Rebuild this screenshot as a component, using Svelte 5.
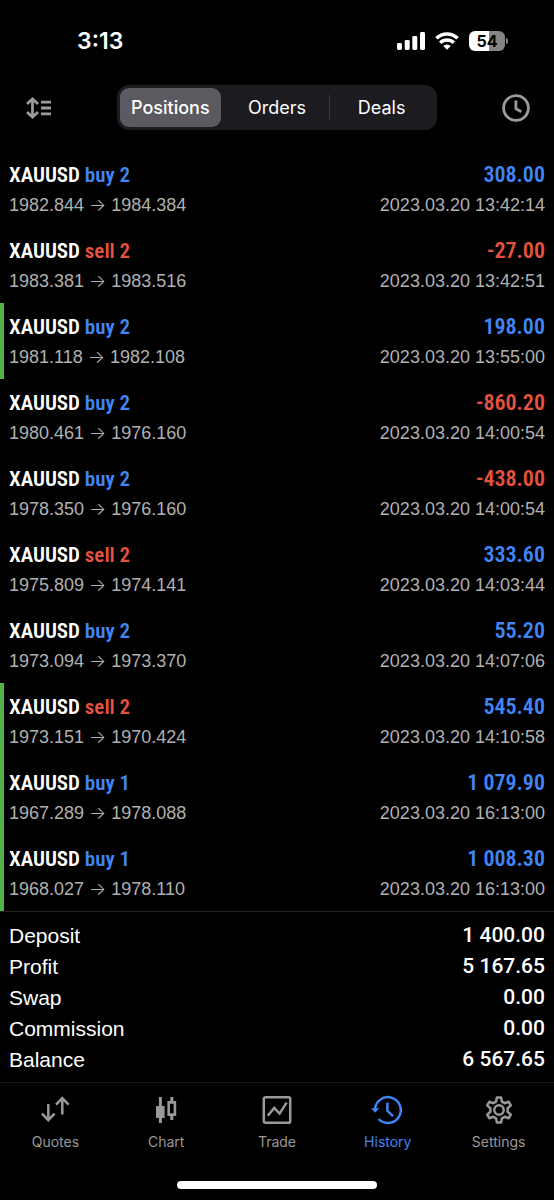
<script lang="ts">
type Position = {
  side: 'buy' | 'sell';
  volume: number;
  open: string;
  close: string;
  profit: string;
  time: string;
  marked?: boolean;
};

const views = ['Positions', 'Orders', 'Deals'];
const tabs = ['Quotes', 'Chart', 'Trade', 'History', 'Settings'];

const positions: Position[] = [
  { side: 'buy', volume: 2, open: '1982.844', close: '1984.384', profit: '308.00', time: '2023.03.20 13:42:14' },
  { side: 'sell', volume: 2, open: '1983.381', close: '1983.516', profit: '-27.00', time: '2023.03.20 13:42:51' },
  { side: 'buy', volume: 2, open: '1981.118', close: '1982.108', profit: '198.00', time: '2023.03.20 13:55:00', marked: true },
  { side: 'buy', volume: 2, open: '1980.461', close: '1976.160', profit: '-860.20', time: '2023.03.20 14:00:54' },
  { side: 'buy', volume: 2, open: '1978.350', close: '1976.160', profit: '-438.00', time: '2023.03.20 14:00:54' },
  { side: 'sell', volume: 2, open: '1975.809', close: '1974.141', profit: '333.60', time: '2023.03.20 14:03:44' },
  { side: 'buy', volume: 2, open: '1973.094', close: '1973.370', profit: '55.20', time: '2023.03.20 14:07:06' },
  { side: 'sell', volume: 2, open: '1973.151', close: '1970.424', profit: '545.40', time: '2023.03.20 14:10:58', marked: true },
  { side: 'buy', volume: 1, open: '1967.289', close: '1978.088', profit: '1 079.90', time: '2023.03.20 16:13:00', marked: true },
  { side: 'buy', volume: 1, open: '1968.027', close: '1978.110', profit: '1 008.30', time: '2023.03.20 16:13:00', marked: true },
];

const summary = [
  ['Deposit', '1 400.00'],
  ['Profit', '5 167.65'],
  ['Swap', '0.00'],
  ['Commission', '0.00'],
  ['Balance', '6 567.65'],
];

let view = $state('Positions');
let tab = $state('History');
</script>

<div class="app">
  <div class="status">
    <span class="time">3:13</span>
    <div class="indicators">
      <svg width="28" height="18" viewBox="0 0 28 18" fill="#fff" aria-hidden="true">
        <rect x="0" y="11" width="5" height="7" rx="1.4" />
        <rect x="7.7" y="8" width="5" height="10" rx="1.4" />
        <rect x="15.3" y="4" width="5" height="14" rx="1.4" />
        <rect x="23" y="0" width="5" height="18" rx="1.4" />
      </svg>
      <svg width="24" height="18" viewBox="0 0 24 18" fill="none" stroke="#fff" stroke-width="3.4" aria-hidden="true">
        <path d="M1.4 6.3a15.2 15.2 0 0 1 21.2 0" />
        <path d="M5.2 10.8a9.7 9.7 0 0 1 13.6 0" />
        <path d="M12 17.8l-3.7-3.7a5.2 5.2 0 0 1 7.4 0z" fill="#fff" stroke="none" />
      </svg>
      <span class="battery"><span>54</span></span>
    </div>
  </div>

  <header>
    <button class="icon" aria-label="Sort">
      <svg width="26" height="22" viewBox="0 0 26 22" fill="none" stroke="#9b9b9b" stroke-width="2.8" aria-hidden="true">
        <path d="M6.5 2v18M1 7 6.5 1.9 12 7M1 15l5.5 5.1L12 15" />
        <path d="M15 5.2h10M15 11h10M15 16.8h10" />
      </svg>
    </button>
    <div class="segments">
      {#each views as name}
        <button class:selected={view === name} onclick={() => (view = name)}>{name}</button>
      {/each}
    </div>
    <button class="icon" aria-label="Period">
      <svg width="28" height="28" viewBox="0 0 28 28" fill="none" stroke="#9b9b9b" stroke-width="2.8" aria-hidden="true">
        <circle cx="14" cy="14" r="12.4" />
        <path d="M13.9 6.5v8.2l5.4 3.1" />
      </svg>
    </button>
  </header>

  <ul class="positions">
    {#each positions as p}
      <li class:marked={p.marked}>
        <div class="line deal">
          <span class="symbol">XAUUSD <span class={p.side}>{p.side} {p.volume}</span></span>
          <span class={p.profit.startsWith('-') ? 'sell' : 'buy'}>{p.profit}</span>
        </div>
        <div class="line detail">
          <span>{p.open} <span class="arrow">→</span> {p.close}</span>
          <span>{p.time}</span>
        </div>
      </li>
    {/each}
  </ul>

  <dl class="summary">
    {#each summary as [label, value]}
      <div class="line">
        <dt>{label}</dt>
        <dd>{value}</dd>
      </div>
    {/each}
  </dl>

  <nav>
    {#each tabs as name}
      <button class:active={tab === name} onclick={() => (tab = name)}>
        <svg width="32" height="30" viewBox="0 0 32 30" fill="none" stroke="currentColor" stroke-width="2.5" aria-hidden="true">
          {#if name === 'Quotes'}
            <path d="M9.3 9v16M3 18.7l6.3 6.5 6.3-6.5M23.3 19.5V3M17 9.6l6.3-6.5 6.3 6.5" />
          {:else if name === 'Chart'}
            <path d="M10.4 2v26M21.8 2v5M21.8 20v5" stroke-width="3" />
            <path d="M6 11h8.6v12H6z" fill="currentColor" stroke="none" />
            <path d="M18.7 7.4h6.2v12.2h-6.2z" stroke-width="2.6" />
          {:else if name === 'Trade'}
            <rect x="2.8" y="2.2" width="26.4" height="25.6" rx="1.6" />
            <path d="M6.8 20.8l6.4-7.8 5.4 5.6 7-11" />
          {:else if name === 'History'}
            <path d="M3 15.2A12.9 12.9 0 1 1 6.6 24" />
            <path d="M-1 13.2h8.2l-4.1 4.6z" fill="currentColor" stroke="none" />
            <path d="M15.4 7.6v8.2l5.6 5.4" />
          {:else}
            <path
              d="M13.9 2.4h4.2l.8 4.2 2.8 1.6 4-1.4 2.1 3.6-3.2 2.8v3.6l3.2 2.8-2.1 3.6-4-1.4-2.8 1.6-.8 4.2h-4.2l-.8-4.2-2.8-1.6-4 1.4-2.1-3.6 3.2-2.8v-3.6l-3.2-2.8 2.1-3.6 4 1.4 2.8-1.6z"
              stroke-linejoin="round"
            />
            <circle cx="16" cy="15" r="4.7" />
          {/if}
        </svg>
        {name}
      </button>
    {/each}
  </nav>
  <div class="home"></div>
</div>

<style>
  :global(body) {
    margin: 0;
    background: #000;
  }

  .app {
    display: flex;
    flex-direction: column;
    min-height: 100vh;
    box-sizing: border-box;
    background: #000;
    color: #fff;
    font-family: Inter, 'Liberation Sans', sans-serif;
  }

  button {
    border: 0;
    padding: 0;
    background: none;
    color: inherit;
    font: inherit;
  }

  svg {
    display: block;
    overflow: visible;
  }

  .status {
    display: flex;
    align-items: center;
    justify-content: space-between;
    height: 82px;
    padding: 0 46px 0 77px;
  }

  .time {
    font-size: 23px;
    font-weight: 600;
  }

  .indicators {
    display: flex;
    align-items: center;
    gap: 10px;
  }

  .battery {
    display: flex;
    align-items: center;
    gap: 1px;
  }

  .battery span {
    width: 36px;
    border-radius: 6px;
    background: linear-gradient(to right, #fff 55%, #858585 55%);
    color: #000;
    font-size: 16px;
    font-weight: 700;
    line-height: 20px;
    text-align: center;
  }

  .battery::after {
    content: '';
    width: 2px;
    height: 6px;
    border-radius: 0 2px 2px 0;
    background: #858585;
  }

  header {
    display: flex;
    align-items: center;
    justify-content: space-between;
    height: 49px;
    padding: 1px 24px 19px 26px;
  }

  .segments {
    display: grid;
    grid-template-columns: 1fr 1fr 1fr;
    flex: 1;
    margin: 0 65px;
    padding: 3px;
    border-radius: 12px;
    background: #1c1b20;
  }

  .segments button {
    position: relative;
    border-radius: 9px;
    font-size: 18px;
    line-height: 39px;
  }

  .segments button.selected {
    margin-right: 4px;
    background: #5b5a60;
    font-weight: 500;
  }

  .segments button:last-child::before {
    content: '';
    position: absolute;
    left: 0;
    top: 7px;
    bottom: 7px;
    width: 1px;
    background: #3b3a3f;
  }

  .positions {
    margin: 0;
    padding: 0;
    list-style: none;
  }

  .positions li {
    display: flex;
    flex-direction: column;
    gap: 3px;
    padding: 9px 9px 10px 5px;
    border-left: 4px solid transparent;
  }

  .positions li.marked {
    border-color: #54b24a;
  }

  .line {
    display: flex;
    justify-content: space-between;
  }

  .deal {
    font-family: 'Roboto Condensed', 'Liberation Sans Narrow', sans-serif;
    font-size: 22px;
    font-weight: 600;
    line-height: 30px;
  }

  .symbol {
    font-size: 21px;
  }

  .detail {
    color: #b0b0b0;
    font-family: 'Liberation Sans', Arial, sans-serif;
    font-size: 18px;
    line-height: 24px;
  }

  .arrow {
    font-family: Inter, sans-serif;
    font-weight: 300;
    line-height: 1;
  }

  .buy {
    color: #4285f4;
  }

  .sell {
    color: #e4533f;
  }

  .summary {
    margin: 0;
    padding: 8px 9px 7px;
    border-top: 1px solid #222;
    font-family: 'Liberation Sans', Arial, sans-serif;
    font-size: 21px;
    line-height: 31px;
  }

  dd {
    margin: 0;
    font-family: Roboto, sans-serif;
    font-weight: 500;
  }

  nav {
    display: grid;
    grid-template-columns: repeat(5, 1fr);
    padding-top: 12px;
    border-top: 1px solid #181818;
    color: #999;
  }

  nav button {
    display: flex;
    flex-direction: column;
    align-items: center;
    gap: 8px;
    font-size: 14px;
    line-height: 18px;
  }

  nav .active {
    color: #4285f4;
  }

  .home {
    width: 36%;
    height: 8px;
    margin: auto auto 11px;
    border-radius: 4px;
    background: #fff;
  }
</style>
